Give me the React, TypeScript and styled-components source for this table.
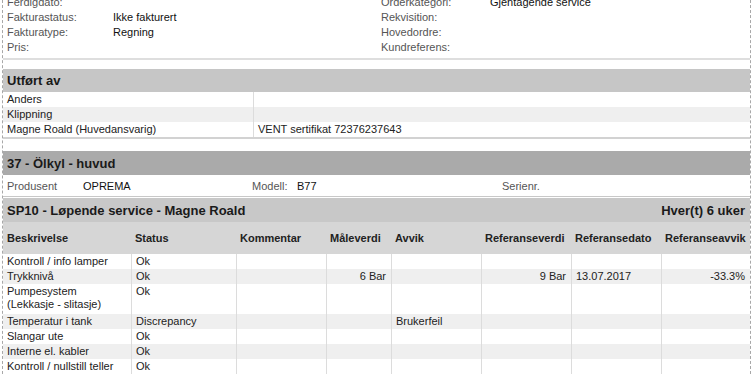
import React from 'react';
import styled, { createGlobalStyle } from 'styled-components';

const GlobalStyle = createGlobalStyle`
  html, body {
    margin: 0;
    padding: 0;
    background: #FFFFFF;
  }
  body {
    font-family: "Liberation Sans", Arial, sans-serif;
    font-size: 11px;
    color: #222222;
  }
`;

const Page = styled.div`
  margin-left: 2px;
  width: 747px;
  height: 374px;
  overflow: hidden;
  border-left: 1px dashed #a8a8a8;
  border-right: 1px dashed #a8a8a8;
`;

const Content = styled.div`
  margin-top: -6px;
`;

const InfoGrid = styled.div`
  display: grid;
  grid-template-columns: 106px 268px 109px 1fr;
  grid-auto-rows: 15px;
  align-items: center;
  padding: 0 0 4px 4px;
  border-bottom: 2px solid #dedede;
`;

const Label = styled.span<{ $w?: number }>`
  color: #555555;
  white-space: nowrap;
  ${p => p.$w ? `width: ${p.$w}px; display: inline-block;` : ''}
`;

const Value = styled.span<{ $w?: number }>`
  color: #111111;
  white-space: nowrap;
  ${p => p.$w ? `width: ${p.$w}px; display: inline-block;` : ''}
`;

const SectionBar = styled.div<{ $bg: string; $h: number; $mt?: number }>`
  display: flex;
  justify-content: space-between;
  align-items: center;
  height: ${p => p.$h}px;
  margin-top: ${p => p.$mt || 0}px;
  padding: 0 5px 0 4px;
  background: ${p => p.$bg};
  font-size: 13px;
  font-weight: bold;
  color: #1a1a1a;
`;

const TwoColTable = styled.div`
  display: grid;
  grid-template-columns: 250px 1fr;
  border-bottom: 2px solid #d2d2d2;
`;

const Cell = styled.div<{ $alt?: boolean; $first?: boolean; $right?: boolean; $h?: number }>`
  min-height: ${p => p.$h || 15}px;
  line-height: 15px;
  padding: 0 5px 0 4px;
  background: ${p => (p.$alt ? '#efefef' : '#FFFFFF')};
  border-left: ${p => (p.$first ? 'none' : '1px solid #dcdcdc')};
  text-align: ${p => (p.$right ? 'right' : 'left')};
  white-space: nowrap;
  overflow: hidden;
`;

const UnitRow = styled.div`
  display: flex;
  align-items: center;
  height: 21px;
  padding-left: 4px;
  border-bottom: 1px solid #c8c8c8;
  margin-bottom: 1px;
`;

const ServiceTable = styled.div`
  display: grid;
  grid-template-columns: 128px 105px 90px 65px 90px 90px 90px 89px;
  border-bottom: 2px solid #d2d2d2;
`;

const HeadCell = styled.div`
  display: flex;
  align-items: center;
  height: 31px;
  padding: 0 4px 1px 4px;
  background: #d6d6d6;
  font-weight: bold;
  white-space: nowrap;
`;

// wrapped descriptions sit a little tighter than single-line rows
const Desc = styled.span`
  display: inline-block;
  white-space: pre-line;
  line-height: 13px;
  padding-top: 1px;
`;

const columns = [
  'Beskrivelse',
  'Status',
  'Kommentar',
  'Måleverdi',
  'Avvik',
  'Referanseverdi',
  'Referansedato',
  'Referanseavvik',
];

type Check = {
  desc: string;
  status: string;
  comment?: string;
  measured?: string;
  deviation?: string;
  refValue?: string;
  refDate?: string;
  refDeviation?: string;
  tall?: boolean;
};

const checks: Check[] = [
  { desc: 'Kontroll / info lamper', status: 'Ok' },
  { desc: 'Trykknivå', status: 'Ok', measured: '6 Bar', refValue: '9 Bar', refDate: '13.07.2017', refDeviation: '-33.3%' },
  { desc: 'Pumpesystem\n(Lekkasje - slitasje)', status: 'Ok', tall: true },
  { desc: 'Temperatur i tank', status: 'Discrepancy', deviation: 'Brukerfeil' },
  { desc: 'Slangar ute', status: 'Ok' },
  { desc: 'Interne el. kabler', status: 'Ok' },
  { desc: 'Kontroll / nullstill teller', status: 'Ok' },
];

const App = (): JSX.Element => {
  return (
    <Page>
      <GlobalStyle />
      <Content>
        <InfoGrid>
          <Label>Ferdigdato:</Label><Value></Value>
          <Label>Orderkategori:</Label><Value>Gjentagende service</Value>
          <Label>Fakturastatus:</Label><Value>Ikke fakturert</Value>
          <Label>Rekvisition:</Label><Value></Value>
          <Label>Fakturatype:</Label><Value>Regning</Value>
          <Label>Hovedordre:</Label><Value></Value>
          <Label>Pris:</Label><Value></Value>
          <Label>Kundreferens:</Label><Value></Value>
        </InfoGrid>

        <SectionBar $bg="#c6c6c6" $h={23} $mt={9}>Utført av</SectionBar>
        <TwoColTable>
          <Cell $first>Anders</Cell>
          <Cell></Cell>
          <Cell $first $alt>Klippning</Cell>
          <Cell $alt></Cell>
          <Cell $first>Magne Roald (Huvedansvarig)</Cell>
          <Cell>VENT sertifikat 72376237643</Cell>
        </TwoColTable>

        <SectionBar $bg="#aaaaaa" $h={24} $mt={12}>37 - Ölkyl - huvud</SectionBar>
        <UnitRow>
          <Label $w={76}>Produsent</Label>
          <Value $w={169}>OPREMA</Value>
          <Label $w={45}>Modell:</Label>
          <Value $w={205}>B77</Value>
          <Label>Serienr.</Label>
        </UnitRow>

        <SectionBar $bg="#c8c8c8" $h={24}>
          <span>SP10 - Løpende service - Magne Roald</span>
          <span>Hver(t) 6 uker</span>
        </SectionBar>
        <ServiceTable>
          {columns.map(c => (
            <HeadCell key={c}>{c}</HeadCell>
          ))}
          {checks.map((row, i) => {
            const alt = i % 2 === 1;
            const h = row.tall ? 30 : 15;
            return (
              <React.Fragment key={row.desc}>
                <Cell $first $alt={alt} $h={h}>
                  {row.tall ? <Desc>{row.desc}</Desc> : row.desc}
                </Cell>
                <Cell $alt={alt} $h={h}>{row.status}</Cell>
                <Cell $alt={alt} $h={h}>{row.comment}</Cell>
                <Cell $alt={alt} $h={h} $right>{row.measured}</Cell>
                <Cell $alt={alt} $h={h}>{row.deviation}</Cell>
                <Cell $alt={alt} $h={h} $right>{row.refValue}</Cell>
                <Cell $alt={alt} $h={h}>{row.refDate}</Cell>
                <Cell $alt={alt} $h={h} $right>{row.refDeviation}</Cell>
              </React.Fragment>
            );
          })}
        </ServiceTable>
      </Content>
    </Page>
  );
};

export default App;
